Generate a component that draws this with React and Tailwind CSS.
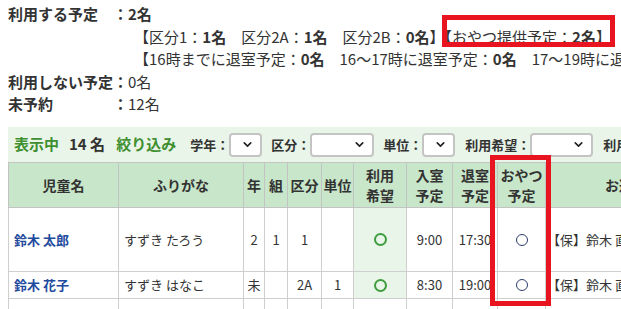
import React from 'react';
import { ChevronDown } from 'lucide-react';

const font = { fontFamily: '"Noto Sans CJK JP", "Noto Sans", sans-serif' };

const Select = ({ w }) => (
    <div className={`h-6 ${w} rounded-[4px] border-2 border-[#c4c4c4] bg-white flex items-center justify-end pr-1.5 shrink-0`}>
        <ChevronDown size={13} strokeWidth={3} className="text-[#222]" />
    </div>
);

const GreenRing = () => <div className="mx-auto w-[13px] h-[13px] rounded-full border-2 border-[#3f9d3f]" />;
const NavyRing = () => <div className="mx-auto w-3 h-3 rounded-full border border-[#2d3d6b]" />;

const cols = [110, 125, 21, 23, 34, 32, 53, 46, 45, 48, 161, 160];

export default function App() {
    return (
        <div className="w-[621px] h-[309px] overflow-hidden bg-white text-[#333]" style={font}>
            {/* summary */}
            <div className="pl-2 pt-[3px] text-[15px] leading-[22px] whitespace-nowrap">
                <div className="font-bold">
                    <span className="inline-block w-[105px]">利用する予定</span>：2名
                </div>
                <div className="pl-[126px] mt-[1px]">
                    【区分1：<b>1名</b>　区分2A：<b>1名</b>　区分2B：<b>0名</b>】<span className="relative">
                        【おやつ提供予定：<b>2名</b>】
                        <span className="absolute -left-[3px] -right-[4px] -top-[11px] bottom-0 border-[5px] border-[#e8141f]" />
                    </span>
                </div>
                <div className="pl-[126px]">
                    【16時までに退室予定：<b>0名</b>　16〜17時に退室予定：<b>0名</b>　17〜19時に退室予定：<b>2名</b>】
                </div>
                <div className="mt-[1px]">
                    <span className="inline-block w-[105px] font-bold">利用しない予定</span><b>：</b>0名
                </div>
                <div>
                    <span className="inline-block w-[105px] font-bold">未予約</span><b>：</b>12名
                </div>
            </div>

            {/* list */}
            <div className="relative mt-[12px] ml-2">
                <div className="h-[35px] bg-[#e9f5e9] flex items-center whitespace-nowrap">
                    <span className="ml-[6px] text-[15px] font-bold text-[#3f8f30]">表示中</span>
                    <span className="ml-[10px] text-[15px] font-bold text-[#333]">14 名</span>
                    <span className="ml-[11px] text-[15px] font-bold text-[#3f8f30]">絞り込み</span>
                    <span className="ml-[14px] text-[13px] font-bold">学年：</span>
                    <Select w="w-[33px]" />
                    <span className="ml-[9px] text-[13px] font-bold">区分：</span>
                    <Select w="w-[64px]" />
                    <span className="ml-[9px] text-[13px] font-bold">単位：</span>
                    <Select w="w-[33px]" />
                    <span className="ml-[10px] text-[13px] font-bold">利用希望：</span>
                    <Select w="w-[63px]" />
                    <span className="ml-[10px] text-[13px] font-bold">利用状況：</span>
                </div>

                <table className="table-fixed border-collapse text-[13px]" style={{ width: cols.reduce((a, b) => a + b, 0) }}>
                    <colgroup>
                        {cols.map((w, i) => <col key={i} style={{ width: w }} />)}
                    </colgroup>
                    <thead>
                        <tr className="h-[45px] bg-[#c8e6c9] text-[14px] font-bold leading-[20px]">
                            {['児童名', 'ふりがな', '年', '組', '区分', '単位'].map(h => (
                                <th key={h} className="border border-[#c3c3c3] px-0 text-center">{h}</th>
                            ))}
                            <th className="border border-[#c3c3c3]">利用<br />希望</th>
                            <th className="border border-[#c3c3c3]">入室<br />予定</th>
                            <th className="border border-[#c3c3c3]">退室<br />予定</th>
                            <th className="border border-[#c3c3c3]">おやつ<br />予定</th>
                            <th className="border border-[#c3c3c3]">お迎え</th>
                            <th className="border border-[#c3c3c3]">連絡事項</th>
                        </tr>
                    </thead>
                    <tbody className="whitespace-nowrap">
                        <tr className="h-[64px]">
                            <td className="border border-[#cfcfcf] pl-[5px] font-bold text-[#1f4b9e]">鈴木 太郎</td>
                            <td className="border border-[#cfcfcf] pl-[5px]">すずき たろう</td>
                            <td className="border border-[#cfcfcf] text-center">2</td>
                            <td className="border border-[#cfcfcf] text-center">1</td>
                            <td className="border border-[#cfcfcf] text-center">1</td>
                            <td className="border border-[#cfcfcf] text-center"></td>
                            <td className="border border-[#cfcfcf] bg-[#e8f5e8]"><GreenRing /></td>
                            <td className="border border-[#cfcfcf] text-center">9:00</td>
                            <td className="border border-[#cfcfcf] text-center">17:30</td>
                            <td className="border border-[#cfcfcf]"><NavyRing /></td>
                            <td className="border border-[#cfcfcf] pl-[1px]">【保】鈴木 直子</td>
                            <td className="border border-[#cfcfcf]"></td>
                        </tr>
                        <tr className="h-[27px]">
                            <td className="border border-[#cfcfcf] pl-[5px] font-bold text-[#1f4b9e]">鈴木 花子</td>
                            <td className="border border-[#cfcfcf] pl-[5px]">すずき はなこ</td>
                            <td className="border border-[#cfcfcf] text-center">未</td>
                            <td className="border border-[#cfcfcf] text-center"></td>
                            <td className="border border-[#cfcfcf] text-center">2A</td>
                            <td className="border border-[#cfcfcf] text-center">1</td>
                            <td className="border border-[#cfcfcf] bg-[#e8f5e8]"><GreenRing /></td>
                            <td className="border border-[#cfcfcf] text-center">8:30</td>
                            <td className="border border-[#cfcfcf] text-center">19:00</td>
                            <td className="border border-[#cfcfcf]"><NavyRing /></td>
                            <td className="border border-[#cfcfcf] pl-[1px]">【保】鈴木 直子</td>
                            <td className="border border-[#cfcfcf]"></td>
                        </tr>
                        <tr className="h-[27px]">
                            {cols.map((_, i) => <td key={i} className="border border-[#cfcfcf]"></td>)}
                        </tr>
                    </tbody>
                </table>

                {/* highlight on the snack column */}
                <div className="absolute left-[482px] top-[28px] w-[61px] h-[151px] border-[5px] border-[#e8141f] pointer-events-none" />
            </div>
        </div>
    );
}
